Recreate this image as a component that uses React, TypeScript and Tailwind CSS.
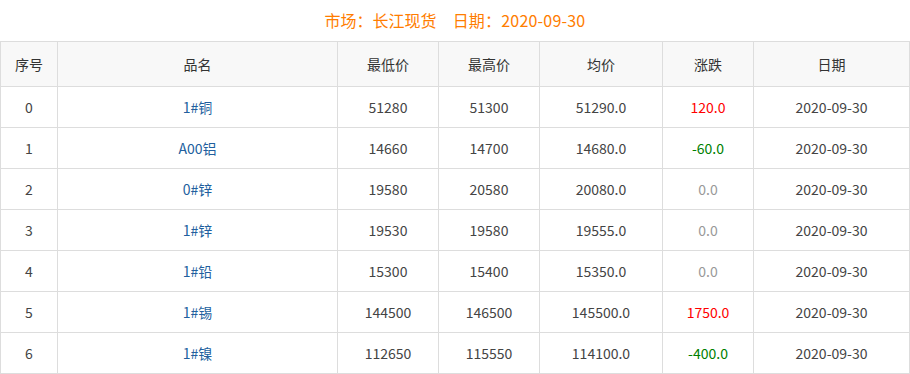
const rows = [
  { id: 0, name: "1#铜", low: "51280", high: "51300", avg: "51290.0", change: "120.0", date: "2020-09-30" },
  { id: 1, name: "A00铝", low: "14660", high: "14700", avg: "14680.0", change: "-60.0", date: "2020-09-30" },
  { id: 2, name: "0#锌", low: "19580", high: "20580", avg: "20080.0", change: "0.0", date: "2020-09-30" },
  { id: 3, name: "1#锌", low: "19530", high: "19580", avg: "19555.0", change: "0.0", date: "2020-09-30" },
  { id: 4, name: "1#铅", low: "15300", high: "15400", avg: "15350.0", change: "0.0", date: "2020-09-30" },
  { id: 5, name: "1#锡", low: "144500", high: "146500", avg: "145500.0", change: "1750.0", date: "2020-09-30" },
  { id: 6, name: "1#镍", low: "112650", high: "115550", avg: "114100.0", change: "-400.0", date: "2020-09-30" },
];

function changeColor(v: string) {
  const n = parseFloat(v);
  if (n > 0) return "text-[#ff0000]";
  if (n < 0) return "text-[#008000]";
  return "text-[#999999]";
}

export default function App() {
  return (
    <div className="w-[910px] bg-white text-[14px] text-[#444] font-['Microsoft_YaHei','Noto_Sans_CJK_SC',sans-serif]">
      <div className="h-[41px] flex items-center justify-center text-[16px] text-[#ff7d00] pb-[1px]">
        <span>市场：长江现货</span>
        <span className="ml-[16px] tracking-[0.2px]">日期：2020-09-30</span>
      </div>
      <table className="w-[910px] border-collapse table-fixed">
        <colgroup>
          <col className="w-[57px]" />
          <col className="w-[280px]" />
          <col className="w-[101px]" />
          <col className="w-[101px]" />
          <col className="w-[123px]" />
          <col className="w-[91px]" />
          <col />
        </colgroup>
        <thead>
          <tr className="h-[45px] bg-[#f8f8f8] text-[#333]">
            {["序号", "品名", "最低价", "最高价", "均价", "涨跌", "日期"].map((h) => (
              <th key={h} className="border border-[#dddddd] font-normal text-center p-0">
                {h}
              </th>
            ))}
          </tr>
        </thead>
        <tbody>
          {rows.map((r) => (
            <tr key={r.id} className="h-[41px]">
              <td className="border border-[#dddddd] text-center">{r.id}</td>
              <td className="border border-[#dddddd] text-center text-[#225f9e]">{r.name}</td>
              <td className="border border-[#dddddd] text-center">{r.low}</td>
              <td className="border border-[#dddddd] text-center">{r.high}</td>
              <td className="border border-[#dddddd] text-center">{r.avg}</td>
              <td className={`border border-[#dddddd] text-center ${changeColor(r.change)}`}>{r.change}</td>
              <td className="border border-[#dddddd] text-center">{r.date}</td>
            </tr>
          ))}
        </tbody>
      </table>
    </div>
  );
}
